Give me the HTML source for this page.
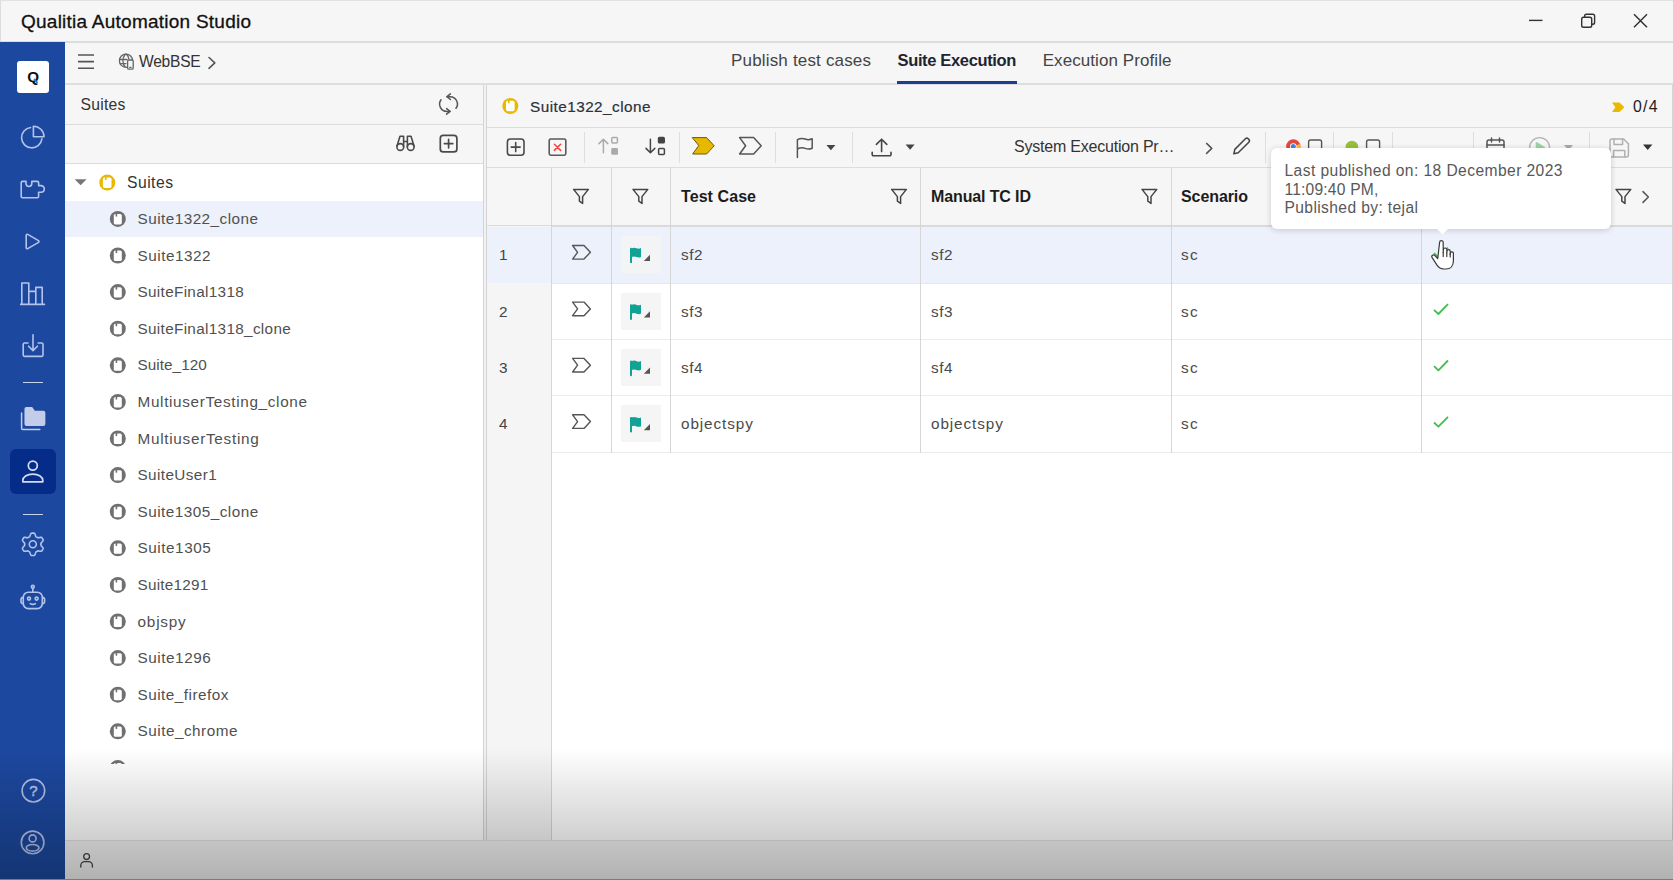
<!DOCTYPE html>
<html lang="en">
<head>
<meta charset="utf-8">
<title>Qualitia Automation Studio</title>
<style>
*{box-sizing:border-box;margin:0;padding:0}
html,body{width:1673px;height:880px;overflow:hidden;background:#fff}
body{font-family:"Liberation Sans",sans-serif;color:#333;position:relative}
.abs{position:absolute}
.t{position:absolute;white-space:nowrap;line-height:1}
svg{position:absolute;overflow:visible}
/* title bar */
#titlebar{left:0;top:0;width:1673px;height:43px;background:#f6f6f6;border-top:1px solid #e2e2e2;border-bottom:2px solid #dddddd;border-left:1px solid #ddd}
/* sidebar */
#sidebar{left:0;top:42px;width:65px;height:838px;background:#1c489f}
/* top nav */
#nav{left:65px;top:43px;width:1608px;height:42px;background:#f6f6f6;border-bottom:2px solid #dedede}
/* left panel */
#lp-head{left:65px;top:85px;width:418px;height:40px;background:#f6f6f6;border-bottom:1px solid #dcdcdc}
#lp-tools{left:65px;top:125px;width:418px;height:39px;background:#f6f6f6;border-bottom:1px solid #dcdcdc}
#lp-tree{left:65px;top:164px;width:418px;height:676px;background:#fff}
.row{position:absolute;left:0;width:417px;height:37px}
.row.sel{background:#ecf1fc}
/* splitter */
#split{left:483px;top:85px;width:4px;height:755px;background:#f2f2f2;border-left:1px solid #d4d4d4;border-right:1px solid #d4d4d4}
/* right panel */
#rp-head{left:487px;top:85px;width:1186px;height:43px;background:#f6f6f6;border-bottom:1px solid #dcdcdc}
#rp-tools{left:487px;top:128px;width:1186px;height:40px;background:#f6f6f6;border-bottom:1px solid #dcdcdc}
#grid{left:487px;top:168px;width:1186px;height:672px;background:#fff}
#status{left:65px;top:840px;width:1608px;height:40px;background:#f3f3f3;border-top:1px solid #e2e2e2}
#overlay{left:0;top:748px;width:1673px;height:132px;background:linear-gradient(to bottom,rgba(0,0,0,0) 0%,rgba(0,0,0,.27) 100%);pointer-events:none}
.sep{top:132px;width:1px;height:31px;background:#dedede}
</style>
</head>
<body>
<div class="abs" id="titlebar"></div>
<div class="abs" id="sidebar"></div>
<div class="abs" id="nav"></div>
<div class="abs" id="lp-head"></div>
<div class="abs" id="lp-tools"></div>
<div class="abs" id="lp-tree"></div>
<div class="abs" id="split"></div>
<div class="abs" id="rp-head"></div>
<div class="abs" id="rp-tools"></div>
<div class="abs" id="grid"></div>
<div class="abs" id="status"></div>
<!-- grid structure -->
<div class="abs" style="left:487px;top:168px;width:1186px;height:59px;background:#f6f6f6;border-bottom:2px solid #dadada"></div>
<div class="abs" style="left:487px;top:226px;width:65px;height:614px;background:#f5f5f5"></div>
<div class="abs" style="left:487px;top:227px;width:1186px;height:56px;background:#ecf1fc"></div>
<div class="abs" style="left:552px;top:283px;width:1121px;height:1px;background:#e6e6e6"></div>
<div class="abs" style="left:552px;top:339px;width:1121px;height:1px;background:#ebebeb"></div>
<div class="abs" style="left:552px;top:395px;width:1121px;height:1px;background:#ebebeb"></div>
<div class="abs" style="left:552px;top:452px;width:1121px;height:1px;background:#ececec"></div>
<div class="abs" style="left:551px;top:168px;width:1px;height:672px;background:#d6d6d6"></div>
<div class="abs" style="left:611px;top:168px;width:1px;height:285px;background:#d6d6d6"></div>
<div class="abs" style="left:670px;top:168px;width:1px;height:285px;background:#d6d6d6"></div>
<div class="abs" style="left:920px;top:168px;width:1px;height:285px;background:#d6d6d6"></div>
<div class="abs" style="left:1171px;top:168px;width:1px;height:285px;background:#d6d6d6"></div>
<div class="abs" style="left:1421px;top:168px;width:1px;height:285px;background:#d6d6d6"></div>
<div class="abs" style="left:1672px;top:84px;width:1px;height:756px;background:#d6d6d6"></div>
<!-- flag cell boxes -->
<div class="abs" style="left:620.500px;top:236px;width:40.500px;height:37px;background:#f3f4f6"></div>
<div class="abs" style="left:620.500px;top:293px;width:40.500px;height:37px;background:#f5f5f5"></div>
<div class="abs" style="left:620.500px;top:349px;width:40.500px;height:37px;background:#f5f5f5"></div>
<div class="abs" style="left:620.500px;top:405px;width:40.500px;height:37px;background:#f5f5f5"></div>
<!-- toolbar separators -->
<div class="abs sep" style="left:584px"></div>
<div class="abs sep" style="left:679px"></div>
<div class="abs sep" style="left:775px"></div>
<div class="abs sep" style="left:852px"></div>
<div class="abs sep" style="left:1265px"></div>
<div class="abs sep" style="left:1333px"></div>
<div class="abs sep" style="left:1392px"></div>
<div class="abs sep" style="left:1473px"></div>
<div class="abs sep" style="left:1589px"></div>
<!-- active tab underline -->
<div class="abs" style="left:897px;top:80.5px;width:120px;height:3.5px;background:#1d3f8f"></div>
<!-- tree selected row -->
<div class="abs" style="left:65px;top:201px;width:418px;height:36px;background:#ecf1fc"></div>
<!-- sidebar -->
<div class="abs" style="left:17px;top:61px;width:32px;height:32px;background:#fff;border-radius:3px"></div>
<div class="abs" style="left:10px;top:449px;width:46px;height:45px;background:#062c8a;border-radius:6px"></div>
<div class="abs" style="left:23px;top:382px;width:20px;height:1px;background:#c9d4ee"></div>
<div class="abs" style="left:23px;top:514px;width:20px;height:1px;background:#c9d4ee"></div>
<div class="abs" style="left:0;top:879px;width:1673px;height:1px;background:#a8a8a8"></div>

<svg class="abs" style="left:0;top:0" width="1673" height="880" viewBox="0 0 1673 880" fill="none" stroke-linecap="round" stroke-linejoin="round">
<!-- window controls -->
<g stroke="#333" stroke-width="1.4" stroke-linecap="butt">
<path d="M1529 20.4H1542.5"/>
<rect x="1581.7" y="17.2" width="10" height="10" rx="1.8"/>
<path d="M1584.6 17v-1a1.8 1.8 0 0 1 1.8-1.8h6.4a1.8 1.8 0 0 1 1.8 1.8v6.4a1.8 1.8 0 0 1-1.8 1.8h-1"/>
<path d="M1634 14.2l13 13M1647 14.2l-13 13" stroke-width="1.5"/>
</g>
<!-- nav: hamburger, globe, chevron -->
<g stroke="#555" stroke-width="1.6" stroke-linecap="butt">
<path d="M78 55H94M78 61.6H94M78 68.2H94"/>
</g>
<g stroke="#666" stroke-width="1.3">
<circle cx="126" cy="60.7" r="6.6"/>
<path d="M119.6 59.5H127M120.2 63.6H126M125.3 54.2c-3.2 3.6-3.2 9.6 0 13M126.6 54.2c1.2 1.3 2 3 2.3 4.6"/>
<rect x="127.6" y="60" width="5.6" height="9.2" rx="1.2" fill="#f6f6f6"/>
<path d="M129.8 67.4h1.2"/>
</g>
<path d="M209 57.5l5.8 5.4-5.8 5.4" stroke="#555" stroke-width="1.6"/>
<!-- left panel: sync, binoculars, plus -->
<g stroke="#555" stroke-width="1.5">
<path d="M447 96.7h3.2a7.3 7.3 0 0 1 5.8 11.6"/>
<path d="M450.4 93.9l-3.4 2.8 3.4 2.8"/>
<path d="M450 111.4h-3.2a7.3 7.3 0 0 1 -5.8 -11.6"/>
<path d="M446.6 108.6l3.4 2.8-3.4 2.8"/>
</g>
<g stroke="#4a4a4a" stroke-width="1.6">
<circle cx="400.3" cy="147" r="3.4"/>
<circle cx="410.7" cy="147" r="3.4"/>
<path d="M397 146l3-9.8h3.6v10.5M414 146l-3-9.8h-3.6v10.5M403.6 141.5h3.8"/>
</g>
<g stroke="#4a4a4a" stroke-width="1.7">
<rect x="440.3" y="135.3" width="16.6" height="16.6" rx="3"/>
<path d="M444.4 143.6h8.4M448.6 139.4v8.4"/>
</g>
<!-- tree caret + root icon -->
<path d="M74.6 179.3h12l-6 6z" fill="#777" stroke="none"/>
<circle cx="107.3" cy="182.600" r="8" fill="#e9b900" stroke="none"/>
<rect x="102.9" y="177.500" width="8.600" height="10.400" rx="1.700" fill="#fff" stroke="none"/>
<rect x="104.900" y="176.800" width="1.600" height="3.200" fill="#e9b900" stroke="none"/>
<clipPath id="treeclip"><rect x="66" y="164" width="417" height="600"/></clipPath><g clip-path="url(#treeclip)">
<circle cx="117.8" cy="218.90" r="8" fill="#707070" stroke="none"/><rect x="113.8" y="214.00" width="8" height="10.4" rx="1.6" fill="#fff" stroke="none"/><rect x="115.6" y="213.30" width="1.6" height="3.2" fill="#707070" stroke="none"/>
<circle cx="117.8" cy="255.50" r="8" fill="#707070" stroke="none"/><rect x="113.8" y="250.60" width="8" height="10.4" rx="1.6" fill="#fff" stroke="none"/><rect x="115.6" y="249.90" width="1.6" height="3.2" fill="#707070" stroke="none"/>
<circle cx="117.8" cy="292.10" r="8" fill="#707070" stroke="none"/><rect x="113.8" y="287.20" width="8" height="10.4" rx="1.6" fill="#fff" stroke="none"/><rect x="115.6" y="286.50" width="1.6" height="3.2" fill="#707070" stroke="none"/>
<circle cx="117.8" cy="328.70" r="8" fill="#707070" stroke="none"/><rect x="113.8" y="323.80" width="8" height="10.4" rx="1.6" fill="#fff" stroke="none"/><rect x="115.6" y="323.10" width="1.6" height="3.2" fill="#707070" stroke="none"/>
<circle cx="117.8" cy="365.30" r="8" fill="#707070" stroke="none"/><rect x="113.8" y="360.40" width="8" height="10.4" rx="1.6" fill="#fff" stroke="none"/><rect x="115.6" y="359.70" width="1.6" height="3.2" fill="#707070" stroke="none"/>
<circle cx="117.8" cy="401.90" r="8" fill="#707070" stroke="none"/><rect x="113.8" y="397.00" width="8" height="10.4" rx="1.6" fill="#fff" stroke="none"/><rect x="115.6" y="396.30" width="1.6" height="3.2" fill="#707070" stroke="none"/>
<circle cx="117.8" cy="438.50" r="8" fill="#707070" stroke="none"/><rect x="113.8" y="433.60" width="8" height="10.4" rx="1.6" fill="#fff" stroke="none"/><rect x="115.6" y="432.90" width="1.6" height="3.2" fill="#707070" stroke="none"/>
<circle cx="117.8" cy="475.10" r="8" fill="#707070" stroke="none"/><rect x="113.8" y="470.20" width="8" height="10.4" rx="1.6" fill="#fff" stroke="none"/><rect x="115.6" y="469.50" width="1.6" height="3.2" fill="#707070" stroke="none"/>
<circle cx="117.8" cy="511.70" r="8" fill="#707070" stroke="none"/><rect x="113.8" y="506.80" width="8" height="10.4" rx="1.6" fill="#fff" stroke="none"/><rect x="115.6" y="506.10" width="1.6" height="3.2" fill="#707070" stroke="none"/>
<circle cx="117.8" cy="548.30" r="8" fill="#707070" stroke="none"/><rect x="113.8" y="543.40" width="8" height="10.4" rx="1.6" fill="#fff" stroke="none"/><rect x="115.6" y="542.70" width="1.6" height="3.2" fill="#707070" stroke="none"/>
<circle cx="117.8" cy="584.90" r="8" fill="#707070" stroke="none"/><rect x="113.8" y="580.00" width="8" height="10.4" rx="1.6" fill="#fff" stroke="none"/><rect x="115.6" y="579.30" width="1.6" height="3.2" fill="#707070" stroke="none"/>
<circle cx="117.8" cy="621.50" r="8" fill="#707070" stroke="none"/><rect x="113.8" y="616.60" width="8" height="10.4" rx="1.6" fill="#fff" stroke="none"/><rect x="115.6" y="615.90" width="1.6" height="3.2" fill="#707070" stroke="none"/>
<circle cx="117.8" cy="658.10" r="8" fill="#707070" stroke="none"/><rect x="113.8" y="653.20" width="8" height="10.4" rx="1.6" fill="#fff" stroke="none"/><rect x="115.6" y="652.50" width="1.6" height="3.2" fill="#707070" stroke="none"/>
<circle cx="117.8" cy="694.70" r="8" fill="#707070" stroke="none"/><rect x="113.8" y="689.80" width="8" height="10.4" rx="1.6" fill="#fff" stroke="none"/><rect x="115.6" y="689.10" width="1.6" height="3.2" fill="#707070" stroke="none"/>
<circle cx="117.8" cy="731.30" r="8" fill="#707070" stroke="none"/><rect x="113.8" y="726.40" width="8" height="10.4" rx="1.6" fill="#fff" stroke="none"/><rect x="115.6" y="725.70" width="1.6" height="3.2" fill="#707070" stroke="none"/>
<circle cx="117.8" cy="767.90" r="8" fill="#707070" stroke="none"/><rect x="113.8" y="763.00" width="8" height="10.4" rx="1.6" fill="#fff" stroke="none"/><rect x="115.6" y="762.30" width="1.6" height="3.2" fill="#707070" stroke="none"/>
</g>
<!-- right panel header icon -->
<circle cx="510.3" cy="106" r="8" fill="#e9b900" stroke="none"/>
<rect x="506" y="100.800" width="8.600" height="10.400" rx="1.700" fill="#fff" stroke="none"/>
<rect x="508" y="100.100" width="1.600" height="3.200" fill="#e9b900" stroke="none"/>
<!-- count tag -->
<path d="M1612 102.6h7.4l5 4.7-5 4.7h-7.4l3.4-4.7z" fill="#e9b900" stroke="none"/>
<!-- toolbar: add / delete -->
<g stroke="#4a4a4a" stroke-width="1.6">
<rect x="507.4" y="139" width="16.6" height="16.2" rx="3"/>
<path d="M511.2 147.1h9M515.7 142.6v9"/>
<rect x="549.2" y="139" width="16.6" height="16.2" rx="1.6" stroke="#5a5a5a"/>
</g>
<path d="M554.4 144.2l6.2 6.2M560.6 144.2l-6.2 6.2" stroke="#f4433a" stroke-width="1.5"/>
<!-- move up (disabled) / move down -->
<g stroke="#aaa" stroke-width="1.5">
<path d="M603.4 152.8V139.4M599 143.6l4.4-4.4 4.4 4.4"/>
<rect x="611.8" y="137.4" width="5.6" height="5.6" rx="1"/>
<rect x="611.2" y="148" width="6.8" height="6.8" rx="1.4" fill="#aaa" stroke="none"/>
</g>
<g stroke="#444" stroke-width="1.5">
<path d="M650.4 139.2V152.6M646 148.4l4.4 4.4 4.4-4.4"/>
<rect x="657.8" y="136.8" width="7.2" height="6.8" rx="1.6" fill="#444" stroke="none"/>
<rect x="658.6" y="148.6" width="5.8" height="5.8" rx="1"/>
</g>
<!-- tags -->
<path d="M692.6 137.6h14l7.6 8.2-7.6 8.2h-14l6-8.2z" fill="#e6b800" stroke="#6b5a10" stroke-width="1"/>
<path d="M739.6 137.6h14l7.6 8.2-7.6 8.2h-14l6-8.2z" stroke="#555" stroke-width="1.5"/>
<!-- flag + caret -->
<path d="M797.4 157.4V139.6c3.2-1.6 5.6-1.4 7.8-.6 2.2.9 4.4 1 7-.2v9.4c-2.6 1.2-4.8 1.100-7 .2-2.200-.8-4.600-1-7.800.6" stroke="#555" stroke-width="1.5"/>
<path d="M826.400 145h9l-4.500 5.200z" fill="#444" stroke="none"/>
<!-- upload + caret -->
<g stroke="#444" stroke-width="1.6">
<path d="M881.600 151.600V139.400M876.400 144.400l5.200-5.200 5.200 5.200"/>
<path d="M872.200 152.200v2.200a1.400 1.400 0 0 0 1.400 1.400h16a1.400 1.400 0 0 0 1.400-1.400v-2.200"/>
</g>
<path d="M905.600 144.600h9l-4.500 5.200z" fill="#444" stroke="none"/>
<!-- chevron + pencil -->
<path d="M1206.600 143.400l5.200 5-5.200 5" stroke="#555" stroke-width="1.5"/>
<path d="M1233.800 153.800l1-4.400 10.600-10.600a2 2 0 0 1 2.800 0l.6.600a2 2 0 0 1 0 2.800l-10.600 10.600z" stroke="#444" stroke-width="1.5"/>
<!-- chrome + checkbox, android + checkbox (mostly hidden behind tooltip) -->
<circle cx="1293.300" cy="146.500" r="7.200" fill="#e8453c" stroke="none"/>
<path d="M1293.300 146.500l-6.300 3.400a7.200 7.200 0 0 0 6.300 3.800z" fill="#2da94f" stroke="none"/>
<path d="M1293.300 146.500v7.200a7.200 7.200 0 0 0 6.800-9.600z" fill="#fcc31e" stroke="none"/>
<circle cx="1293.300" cy="146.500" r="3.300" fill="#fff" stroke="none"/>
<circle cx="1293.300" cy="146.500" r="2.500" fill="#4285f4" stroke="none"/>
<rect x="1308.600" y="140" width="13" height="13" rx="2" stroke="#555" stroke-width="1.400"/>
<path d="M1345.600 153v-6a6.300 6.300 0 0 1 12.600 0v6z" fill="#97c03d" stroke="none"/>
<rect x="1366.600" y="140" width="13" height="13" rx="2" stroke="#555" stroke-width="1.400"/>
<!-- calendar, play(disabled), save(disabled) -->
<g stroke="#555" stroke-width="1.500">
<rect x="1487" y="140" width="17" height="15" rx="2"/>
<path d="M1491.500 138v4M1499.500 138v4M1487 145h17"/>
</g>
<g stroke="#b5b5b5" stroke-width="1.400">
<circle cx="1539.600" cy="147.600" r="10"/>
<path d="M1536.400 142.600l8 5-8 5z" fill="#9ed3a6" stroke="#9ed3a6"/>
</g>
<path d="M1564 145h9l-4.500 5.200z" fill="#aaa" stroke="none"/>
<g stroke="#b0b0b0" stroke-width="1.500">
<path d="M1610 141a2 2 0 0 1 2-2h11.600l4.800 4.800v11.200a2 2 0 0 1-2 2h-14.400a2 2 0 0 1-2-2z"/>
<path d="M1614 139v5.500h8.600v-5.500M1613.600 157v-6.600h11.200v6.600"/>
</g>
<path d="M1643 144.600h9.400l-4.700 5.400z" fill="#333" stroke="none"/>
<!-- header filters -->
<g stroke="#444" stroke-width="1.500" id="filters">
<path d="M573.600 189.400h14.800l-5.800 7.200v6.800l-3.200-2.200v-4.600z"/>
<path d="M633 189.400h14.800l-5.800 7.200v6.800l-3.200-2.200v-4.600z"/>
<path d="M891.600 189.400h14.800l-5.800 7.200v6.800l-3.200-2.200v-4.600z"/>
<path d="M1142 189.400h14.800l-5.800 7.200v6.800l-3.200-2.200v-4.600z"/>
<path d="M1616 189.400h14.800l-5.800 7.200v6.800l-3.200-2.200v-4.600z"/>
</g>
<path d="M1643 191.600l5.400 5.400-5.400 5.400" stroke="#555" stroke-width="1.500"/>
<path d="M572.6 245.50h11.4l6.400 6.800-6.400 6.800h-11.400l5-6.800z" stroke="#555" stroke-width="1.400"/>
<path d="M631 262.30V248.70" stroke="#0fa295" stroke-width="2"/>
<path d="M631 248.50c2.600-1.200 4.200-.8 5.600-.2 1.600.600 2.800.600 4.400-.2v8.800c-1.600.8-2.800.8-4.400.2-1.400-.600-3-1-5.600.2z" fill="#0fa295" stroke="none"/>
<path d="M650 254.70v6.200h-6.200z" fill="#555" stroke="none"/>
<path d="M1434 253.20l4.400 4.200 9.600-9.800" stroke="#3fc04d" stroke-width="1.800" stroke-linecap="butt"/>
<path d="M572.6 302.10h11.4l6.400 6.800-6.400 6.800h-11.400l5-6.800z" stroke="#555" stroke-width="1.400"/>
<path d="M631 318.90V305.30" stroke="#0fa295" stroke-width="2"/>
<path d="M631 305.10c2.600-1.200 4.200-.8 5.600-.2 1.600.600 2.800.600 4.400-.2v8.800c-1.600.8-2.800.8-4.400.2-1.400-.600-3-1-5.600.2z" fill="#0fa295" stroke="none"/>
<path d="M650 311.30v6.200h-6.200z" fill="#555" stroke="none"/>
<path d="M1434 309.80l4.400 4.200 9.600-9.800" stroke="#3fc04d" stroke-width="1.800" stroke-linecap="butt"/>
<path d="M572.6 358.40h11.4l6.400 6.800-6.400 6.800h-11.400l5-6.800z" stroke="#555" stroke-width="1.400"/>
<path d="M631 375.20V361.60" stroke="#0fa295" stroke-width="2"/>
<path d="M631 361.40c2.600-1.200 4.200-.8 5.600-.2 1.600.600 2.800.600 4.400-.2v8.800c-1.600.8-2.800.8-4.400.2-1.400-.600-3-1-5.600.2z" fill="#0fa295" stroke="none"/>
<path d="M650 367.60v6.200h-6.200z" fill="#555" stroke="none"/>
<path d="M1434 366.10l4.400 4.200 9.600-9.800" stroke="#3fc04d" stroke-width="1.800" stroke-linecap="butt"/>
<path d="M572.6 414.80h11.4l6.400 6.800-6.400 6.800h-11.400l5-6.800z" stroke="#555" stroke-width="1.400"/>
<path d="M631 431.60V418.00" stroke="#0fa295" stroke-width="2"/>
<path d="M631 417.80c2.600-1.200 4.200-.8 5.600-.2 1.600.600 2.800.600 4.400-.2v8.800c-1.600.8-2.800.8-4.400.2-1.400-.600-3-1-5.600.2z" fill="#0fa295" stroke="none"/>
<path d="M650 424.00v6.200h-6.200z" fill="#555" stroke="none"/>
<path d="M1434 422.50l4.400 4.200 9.600-9.800" stroke="#3fc04d" stroke-width="1.800" stroke-linecap="butt"/>
<!-- status bar person -->
<g stroke="#444" stroke-width="1.300">
<circle cx="86.600" cy="856.600" r="2.900"/>
<path d="M80.800 867v-1.400a4 4 0 0 1 4-4h3.600a4 4 0 0 1 4 4v1.400"/>
</g>
<g stroke="#b4c3ea" stroke-width="1.600">
<!-- pie -->
<path d="M30.600 127.500a10.200 10.200 0 1 0 11.300 11.400"/>
<path d="M33.400 126.200v10.600h10.600a10.600 10.600 0 0 0-10.600-10.600z"/>
<!-- puzzle -->
<path d="M22.400 181.400h3.600v2.200a2.900 2.900 0 0 0 5.800 0v-2.200h5.600a1.200 1.200 0 0 1 1.200 1.200v3h2.400a3.300 3.300 0 0 1 0 6.600h-2.400v4.400a1.200 1.200 0 0 1-1.200 1.200h-15a1.200 1.200 0 0 1-1.200-1.200v-14a1.200 1.200 0 0 1 1.200-1.200z"/>
<!-- play -->
<path d="M26.200 235.200v12.600a1 1 0 0 0 1.500.860l10.800-6.300a1 1 0 0 0 0-1.720l-10.800-6.300a1 1 0 0 0-1.500.860z"/>
<!-- bars -->
<path d="M21.800 304v-21h7v21M28.800 304v-12.600h7v12.600M35.800 304v-16.600h6.400v16.600M20.600 304.400h23.800"/>
<!-- download -->
<path d="M28 343h-3.400a1.400 1.400 0 0 0-1.400 1.400v10.600a1.400 1.400 0 0 0 1.400 1.400h17a1.400 1.400 0 0 0 1.400-1.400v-10.600a1.400 1.400 0 0 0-1.400-1.400h-3.400"/>
<path d="M33 334.800v15.600M28.600 346.200l4.400 4.400 4.400-4.400"/>
</g>
<!-- folder -->
<g stroke="#c3cdea" stroke-width="1.500">
<path d="M25.200 409a1.200 1.200 0 0 1 1.200-1.200h5.400l2.600 3.600h9a1.200 1.200 0 0 1 1.200 1.200v11.400a1.200 1.200 0 0 1-1.200 1.200h-17a1.200 1.200 0 0 1-1.200-1.200z" fill="#c3cdea"/>
<path d="M21.600 413v15.200a1.200 1.200 0 0 0 1.200 1.200h17"/>
</g>
<!-- user (active) -->
<g stroke="#d3dbf3" stroke-width="1.700">
<circle cx="32.800" cy="465.600" r="4.500"/>
<path d="M22.800 481.800v-1.200c0-3.600 4-6.400 10-6.400s10 2.800 10 6.400v1.200z"/>
</g>
<g stroke="#b4c3ea" stroke-width="1.600">
<path d="M41.00 544.30 L40.99 544.66 L40.97 545.01 L40.93 545.37 L41.17 545.78 L41.66 546.27 L42.17 546.81 L42.64 547.40 L43.04 548.03 L43.15 548.59 L42.95 549.03 L42.73 549.47 L42.50 549.90 L42.25 550.32 L41.97 550.72 L41.69 551.12 L41.15 551.31 L40.41 551.27 L39.66 551.16 L38.93 550.99 L38.26 550.81 L37.79 550.81 L37.50 551.02 L37.21 551.22 L36.90 551.40 L36.59 551.57 L36.27 551.73 L35.94 551.88 L35.71 552.29 L35.53 552.96 L35.31 553.67 L35.03 554.38 L34.69 555.03 L34.26 555.40 L33.78 555.46 L33.29 555.49 L32.80 555.50 L32.31 555.49 L31.82 555.46 L31.34 555.40 L30.91 555.03 L30.57 554.38 L30.29 553.67 L30.07 552.96 L29.89 552.29 L29.66 551.88 L29.33 551.73 L29.01 551.57 L28.70 551.40 L28.39 551.22 L28.10 551.02 L27.81 550.81 L27.34 550.81 L26.67 550.99 L25.94 551.16 L25.19 551.27 L24.45 551.31 L23.91 551.12 L23.63 550.72 L23.35 550.32 L23.10 549.90 L22.87 549.47 L22.65 549.03 L22.45 548.59 L22.56 548.03 L22.96 547.40 L23.43 546.81 L23.94 546.27 L24.43 545.78 L24.67 545.37 L24.63 545.01 L24.61 544.66 L24.60 544.30 L24.61 543.94 L24.63 543.59 L24.67 543.23 L24.43 542.82 L23.94 542.33 L23.43 541.79 L22.96 541.20 L22.56 540.57 L22.45 540.01 L22.65 539.57 L22.87 539.13 L23.10 538.70 L23.35 538.28 L23.63 537.88 L23.91 537.48 L24.45 537.29 L25.19 537.33 L25.94 537.44 L26.67 537.61 L27.34 537.79 L27.81 537.79 L28.10 537.58 L28.39 537.38 L28.70 537.20 L29.01 537.03 L29.33 536.87 L29.66 536.72 L29.89 536.31 L30.07 535.64 L30.29 534.93 L30.57 534.22 L30.91 533.57 L31.34 533.20 L31.82 533.14 L32.31 533.11 L32.80 533.10 L33.29 533.11 L33.78 533.14 L34.26 533.20 L34.69 533.57 L35.03 534.22 L35.31 534.93 L35.53 535.64 L35.71 536.31 L35.94 536.72 L36.27 536.87 L36.59 537.03 L36.90 537.20 L37.21 537.38 L37.50 537.58 L37.79 537.79 L38.26 537.79 L38.93 537.61 L39.66 537.44 L40.41 537.33 L41.15 537.29 L41.69 537.48 L41.97 537.88 L42.25 538.28 L42.50 538.70 L42.73 539.13 L42.95 539.57 L43.15 540.01 L43.04 540.57 L42.64 541.20 L42.17 541.79 L41.66 542.33 L41.17 542.82 L40.93 543.23 L40.97 543.59 L40.99 543.94z"/>
<circle cx="32.800" cy="544.300" r="3.500"/>
<!-- robot -->
<rect x="23.300" y="592.200" width="19" height="16.400" rx="5"/>
<path d="M32.800 592v-3.600M23 597.400a2.200 2.200 0 0 0-2 2.200v2a2.200 2.200 0 0 0 2 2.200M42.600 597.400a2.200 2.200 0 0 1 2 2.200v2a2.200 2.200 0 0 1-2 2.200"/>
<circle cx="32.800" cy="586.800" r="1.400"/>
<circle cx="29" cy="598.600" r="1.500"/>
<circle cx="36.600" cy="598.600" r="1.500"/>
<path d="M30.200 603.600q2.600 1.500 5.200 0"/>
<!-- help -->
<circle cx="33.400" cy="790.700" r="11.300"/>
<!-- account -->
<circle cx="32.600" cy="842.400" r="11.300"/>
<circle cx="32.600" cy="838.400" r="3.500"/>
<ellipse cx="32.600" cy="847.800" rx="6.400" ry="3.300"/>
</g>
<text x="33.500" y="796" font-family="Liberation Sans, sans-serif" font-size="15" font-weight="400" fill="#b4c3ea" stroke="#b4c3ea" stroke-width=".5" text-anchor="middle">?</text>
<text x="33.200" y="82.300" font-family="Liberation Sans, sans-serif" font-size="15.200" font-weight="700" fill="#111" stroke="none" text-anchor="middle">Q</text>
<path d="M34.600 79.600l2.300 2.700" stroke="#1b7fe0" stroke-width="2"/>

</svg>

<div class="abs" style="left:1271px;top:148px;width:340px;height:81px;background:#fff;border-radius:6px;box-shadow:0 1px 6px rgba(0,0,0,.18)"></div>
<svg class="abs" style="left:1435.500px;top:228px" width="13" height="8" viewBox="0 0 13 8"><path d="M0 0h13l-6.500 6.500z" fill="#fff"/></svg>

<div class="t" id="title" style="left:21.00px;top:12.00px;font-size:19.00px;color:#111;letter-spacing:0.243px;-webkit-text-stroke:.3px #111;">Qualitia Automation Studio</div>
<div class="t" id="web" style="left:139.00px;top:54.00px;font-size:15.60px;color:#333;letter-spacing:-0.247px;">WebBSE</div>
<div class="t" id="tab1" style="left:731.00px;top:52.00px;font-size:17.00px;color:#444;letter-spacing:0.176px;">Publish test cases</div>
<div class="t" id="tab2" style="left:897.50px;top:52.00px;font-size:16.50px;color:#1f2430;font-weight:700;letter-spacing:-0.349px;">Suite Execution</div>
<div class="t" id="tab3" style="left:1042.70px;top:52.00px;font-size:17.00px;color:#444;letter-spacing:0.076px;">Execution Profile</div>
<div class="t" id="lph" style="left:80.40px;top:97.00px;font-size:15.70px;color:#333;letter-spacing:0.278px;">Suites</div>
<div class="t" id="root" style="left:127.00px;top:175.00px;font-size:15.70px;color:#333;letter-spacing:0.478px;">Suites</div>
<div class="t" id="r0" style="left:137.50px;top:211.00px;font-size:15.30px;color:#505050;letter-spacing:0.465px;">Suite1322_clone</div>
<div class="t" id="r1" style="left:137.50px;top:248.00px;font-size:15.30px;color:#505050;letter-spacing:0.512px;">Suite1322</div>
<div class="t" id="r2" style="left:137.50px;top:284.00px;font-size:15.30px;color:#505050;letter-spacing:0.322px;">SuiteFinal1318</div>
<div class="t" id="r3" style="left:137.50px;top:321.00px;font-size:15.30px;color:#505050;letter-spacing:0.322px;">SuiteFinal1318_clone</div>
<div class="t" id="r4" style="left:137.50px;top:357.00px;font-size:15.30px;color:#505050;letter-spacing:0.043px;">Suite_120</div>
<div class="t" id="r5" style="left:137.50px;top:394.00px;font-size:15.30px;color:#505050;letter-spacing:0.661px;">MultiuserTesting_clone</div>
<div class="t" id="r6" style="left:137.50px;top:431.00px;font-size:15.30px;color:#505050;letter-spacing:0.715px;">MultiuserTesting</div>
<div class="t" id="r7" style="left:137.50px;top:467.00px;font-size:15.30px;color:#505050;letter-spacing:0.398px;">SuiteUser1</div>
<div class="t" id="r8" style="left:137.50px;top:504.00px;font-size:15.30px;color:#505050;letter-spacing:0.483px;">Suite1305_clone</div>
<div class="t" id="r9" style="left:137.50px;top:540.00px;font-size:15.30px;color:#505050;letter-spacing:0.543px;">Suite1305</div>
<div class="t" id="r10" style="left:137.50px;top:577.00px;font-size:15.30px;color:#505050;letter-spacing:0.230px;">Suite1291</div>
<div class="t" id="r11" style="left:137.50px;top:614.00px;font-size:15.30px;color:#505050;letter-spacing:0.806px;">objspy</div>
<div class="t" id="r12" style="left:137.50px;top:650.00px;font-size:15.30px;color:#505050;letter-spacing:0.543px;">Suite1296</div>
<div class="t" id="r13" style="left:137.50px;top:687.00px;font-size:15.30px;color:#505050;letter-spacing:0.489px;">Suite_firefox</div>
<div class="t" id="r14" style="left:137.50px;top:723.00px;font-size:15.30px;color:#505050;letter-spacing:0.510px;">Suite_chrome</div>
<div class="t" id="rph" style="left:530.00px;top:99.00px;font-size:15.30px;color:#2c313b;letter-spacing:0.465px;-webkit-text-stroke:.2px #2c313b;">Suite1322_clone</div>
<div class="t" id="cnt" style="left:1633.00px;top:99.00px;font-size:15.80px;color:#222;letter-spacing:1.266px;">0/4</div>
<div class="t" id="sysx" style="left:1014.00px;top:139.00px;font-size:16.00px;color:#333;letter-spacing:-0.211px;">System Execution Pr…</div>
<div class="t" id="h1" style="left:681.00px;top:189.00px;font-size:16.00px;color:#1c1c1c;font-weight:700;letter-spacing:0.074px;">Test Case</div>
<div class="t" id="h2" style="left:931.00px;top:189.00px;font-size:16.00px;color:#1c1c1c;font-weight:700;letter-spacing:-0.122px;">Manual TC ID</div>
<div class="t" id="h3" style="left:1181.00px;top:189.00px;font-size:16.00px;color:#1c1c1c;font-weight:700;letter-spacing:-0.085px;">Scenario</div>
<div class="t" id="n0" style="left:499.00px;top:247.00px;font-size:15.30px;color:#444;letter-spacing:0.465px;">1</div>
<div class="t" id="a0" style="left:681.00px;top:247.00px;font-size:15.30px;color:#4a4a4a;letter-spacing:0.547px;">sf2</div>
<div class="t" id="b0" style="left:931.00px;top:247.00px;font-size:15.30px;color:#4a4a4a;letter-spacing:0.547px;">sf2</div>
<div class="t" id="c0" style="left:1181.00px;top:247.00px;font-size:15.30px;color:#4a4a4a;letter-spacing:1.303px;">sc</div>
<div class="t" id="n1" style="left:499.00px;top:304.00px;font-size:15.30px;color:#444;letter-spacing:0.465px;">2</div>
<div class="t" id="a1" style="left:681.00px;top:304.00px;font-size:15.30px;color:#4a4a4a;letter-spacing:0.547px;">sf3</div>
<div class="t" id="b1" style="left:931.00px;top:304.00px;font-size:15.30px;color:#4a4a4a;letter-spacing:0.547px;">sf3</div>
<div class="t" id="c1" style="left:1181.00px;top:304.00px;font-size:15.30px;color:#4a4a4a;letter-spacing:1.303px;">sc</div>
<div class="t" id="n2" style="left:499.00px;top:360.00px;font-size:15.30px;color:#444;letter-spacing:0.465px;">3</div>
<div class="t" id="a2" style="left:681.00px;top:360.00px;font-size:15.30px;color:#4a4a4a;letter-spacing:0.547px;">sf4</div>
<div class="t" id="b2" style="left:931.00px;top:360.00px;font-size:15.30px;color:#4a4a4a;letter-spacing:0.547px;">sf4</div>
<div class="t" id="c2" style="left:1181.00px;top:360.00px;font-size:15.30px;color:#4a4a4a;letter-spacing:1.303px;">sc</div>
<div class="t" id="n3" style="left:499.00px;top:416.00px;font-size:15.30px;color:#444;letter-spacing:0.465px;">4</div>
<div class="t" id="a3" style="left:681.00px;top:416.00px;font-size:15.30px;color:#4a4a4a;letter-spacing:0.897px;">objectspy</div>
<div class="t" id="b3" style="left:931.00px;top:416.00px;font-size:15.30px;color:#4a4a4a;letter-spacing:0.897px;">objectspy</div>
<div class="t" id="c3" style="left:1181.00px;top:416.00px;font-size:15.30px;color:#4a4a4a;letter-spacing:1.303px;">sc</div>
<div class="t" id="tt1" style="left:1284.50px;top:163.00px;font-size:15.60px;color:#585858;letter-spacing:0.425px;">Last published on: 18 December 2023</div>
<div class="t" id="tt2" style="left:1284.50px;top:182.00px;font-size:15.60px;color:#585858;letter-spacing:0.195px;">11:09:40 PM,</div>
<div class="t" id="tt3" style="left:1284.50px;top:200.00px;font-size:15.60px;color:#585858;letter-spacing:0.385px;">Published by: tejal</div>
<svg class="abs" style="left:1429px;top:239px" width="28" height="33" viewBox="0 0 28 33" fill="#fff" stroke="#3a3a3a" stroke-width="1.200" stroke-linejoin="round" stroke-linecap="round">
<path d="M10.600 3.400a1.800 1.800 0 0 1 3.600 0v10.200l.2-3a1.700 1.700 0 0 1 3.400.2v3.200l.2-1.800a1.600 1.600 0 0 1 3.200.2v3l.2-1.200a1.500 1.500 0 0 1 3 .3v7.500c0 4.600-2.800 8-7.400 8h-2.600c-3 0-4.800-1.400-6.400-3.800l-5-7.800a1.700 1.700 0 0 1 2.700-2l3 3.300z"/>
<path d="M14.200 13.600v4M17.800 14v3.600M21.200 15.200v2.800" fill="none"/>
</svg>

<div class="abs" id="overlay"></div>
</body>
</html>
